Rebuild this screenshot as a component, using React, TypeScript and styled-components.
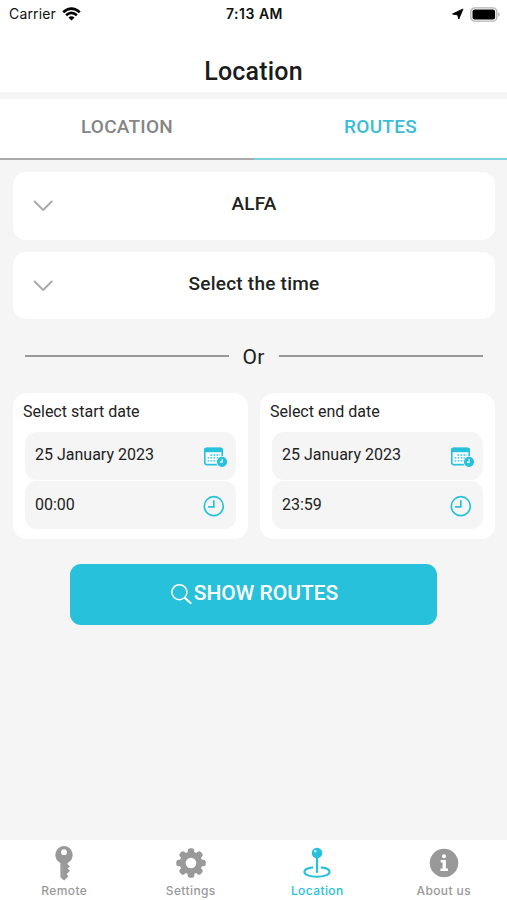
import React from "react";
import styled, { createGlobalStyle } from "styled-components";

const CYAN = "#27c1db";
const GREY = "#999999";

const GlobalStyle = createGlobalStyle`
  * { box-sizing: border-box; }
  body { margin: 0; background: #f5f5f5; font-family: Roboto, "Liberation Sans", sans-serif; color: #222; }
  svg { display: block; flex: none; }
`;

const Screen = styled.div`
  width: 507px;
  height: 900px;
  display: flex;
  flex-direction: column;
  overflow: hidden;
  background: #f5f5f5;
`;

const Header = styled.header`
  height: 92px;
  background: #fff;
`;

const StatusBar = styled.div`
  display: grid;
  grid-template-columns: 1fr auto 1fr;
  align-items: center;
  height: 28px;
  padding: 0 7px 0 9px;
  font: 400 14px/28px Inter, sans-serif;
  color: #111;
`;

const StatusGroup = styled.div<{ $end?: boolean }>`
  display: flex;
  align-items: center;
  gap: ${(p) => (p.$end ? 6 : 6)}px;
  justify-content: ${(p) => (p.$end ? "flex-end" : "flex-start")};
  letter-spacing: 0.15px;
`;

const Time = styled.span`
  font-weight: 600;
  letter-spacing: 0.5px;
`;

const Title = styled.h1`
  margin: 29px 0 0;
  text-align: center;
  font-size: 25px;
  line-height: 30px;
  font-weight: 500;
  letter-spacing: 0.2px;
  color: #1b1b1b;
`;

const Tabs = styled.nav`
  display: grid;
  grid-template-columns: 254px 253px;
  height: 61px;
  margin-top: 7px;
  background: #fff;
`;

const Tab = styled.div<{ $active?: boolean }>`
  padding-top: 16px;
  text-align: center;
  font-size: 19px;
  line-height: 24px;
  font-weight: 500;
  letter-spacing: 0.25px;
  color: ${(p) => (p.$active ? "#38bdd5" : "#858585")};
  border-bottom: 2px solid ${(p) => (p.$active ? "#80d2e0" : "#aaaaaa")};
`;

const Content = styled.main`
  flex: 1;
  padding: 12px 12px 0 13px;
`;

const SelectCard = styled.div`
  display: grid;
  grid-template-columns: 60px 1fr 60px;
  height: 68px;
  margin-bottom: 12px;
  border-radius: 13px;
  background: #fff;

  & + & { height: 67px; }
  svg { margin: 28px 0 0 20px; }
`;

const SelectLabel = styled.span`
  padding-top: 20px;
  text-align: center;
  font-size: 19px;
  line-height: 24px;
  font-weight: 500;
  letter-spacing: 0.23px;
`;

const Divider = styled.div`
  display: flex;
  align-items: center;
  justify-content: space-between;
  height: 24px;
  margin: 25px 12px 25px 12px;
  font-size: 21px;
  line-height: 24px;
`;

const DividerText = styled.span`
  padding: 1px 1px 0 0;
  letter-spacing: 0.2px;
`;

const Line = styled.span`
  width: 204px;
  height: 2px;
  background: #999;
`;

const DateRow = styled.div`
  display: grid;
  grid-template-columns: 1fr 1fr;
  gap: 12px;
`;

const DateCard = styled.section`
  height: 146px;
  padding: 8px 12px 0;
  border-radius: 14px;
  background: #fff;
`;

const DateLabel = styled.div`
  height: 31px;
  margin-left: -2px;
  padding-top: 1px;
  font-size: 16px;
  line-height: 20px;
`;

const Field = styled.div`
  display: flex;
  justify-content: space-between;
  height: 48px;
  margin-bottom: 1px;
  padding: 12px 8px 0 10px;
  border-radius: 12px;
  background: #f5f5f5;
  font-size: 16px;
  line-height: 20px;
`;

const FieldText = styled.span<{ $drop: number }>`
  padding-top: ${(p) => p.$drop}px;
`;

const ShowButton = styled.button`
  display: flex;
  justify-content: center;
  width: 367px;
  height: 61px;
  margin: 25px 0 0 57px;
  padding: 16px 0 0 2px;
  border: 0;
  border-radius: 11px;
  background: ${CYAN};
  color: #fff;
  font: 500 21px/26px Roboto, sans-serif;

  svg { margin: 3px 2px 0 0; }
`;

const BottomNav = styled.nav`
  display: grid;
  grid-template-columns: repeat(4, 1fr);
  height: 60px;
  padding-left: 1px;
  background: #fff;
`;

const NavItem = styled.div<{ $active?: boolean }>`
  display: flex;
  flex-direction: column;
  align-items: center;
  padding-top: 5px;
  color: ${(p) => (p.$active ? CYAN : GREY)};
  font: 500 12px/16px Inter, sans-serif;
  letter-spacing: 0.4px;

  svg { margin-bottom: 2px; }
`;

const Wifi = () => (
  <svg width="19" height="14" viewBox="0 0 19 14" fill="none" stroke="#000" strokeWidth="2.6">
    <path d="M1.2 5.2Q9.5-2 17.8 5.2M4.1 8.3Q9.5 3.5 14.9 8.3" />
    <path d="M9.5 13.5L6.4 10.5Q9.5 7.8 12.6 10.5Z" fill="#000" stroke="none" />
  </svg>
);

const Arrow = () => (
  <svg width="13" height="12" viewBox="0 0 13 12">
    <path d="M12 1L7.8 11 6.7 6.9 1.5 6Z" fill="#000" stroke="#000" strokeWidth=".9" strokeLinejoin="round" />
  </svg>
);

const Battery = () => (
  <svg width="30" height="15" viewBox="0 0 30 15">
    <rect x=".8" y=".8" width="26" height="13.4" rx="4" fill="#fff" stroke="#b2b2b2" strokeWidth="1.3" />
    <rect x="2.5" y="2.5" width="22.6" height="10" rx="2.1" fill="#000" />
    <path d="M28.3 5.1Q31 7.5 28.3 9.9Z" fill="#aaa" />
  </svg>
);

const Chevron = () => (
  <svg width="20" height="12" viewBox="0 0 20 12" fill="none" stroke="#aaa" strokeWidth="1.9" strokeLinecap="round" strokeLinejoin="round">
    <path d="M1.7 1.5L10.2 10L18.7 1.5" />
  </svg>
);

const CalendarIcon = () => (
  <svg width="25" height="24" viewBox="0 0 25 24">
    <rect x="1.8" y="4.4" width="17.4" height="16.2" rx="2" fill="#fff" stroke={CYAN} strokeWidth="1.6" />
    <path d="M1 8.3V6Q1 3.7 3.3 3.7H17.7Q20 3.7 20 6V8.3Z" fill={CYAN} />
    <path d="M7.5 11H17M4.5 13.9H17M4.5 16.8H14" stroke={CYAN} strokeWidth="1.3" strokeDasharray="1.8 1.2" />
    <circle cx="19" cy="17.8" r="5.9" fill="#f5f5f5" />
    <circle cx="19" cy="17.8" r="5.1" fill={CYAN} />
    <path d="M19.2 15V18.1H16.9" fill="none" stroke="#fff" strokeWidth="1.1" />
  </svg>
);

const ClockIcon = () => (
  <svg width="25" height="25" viewBox="0 0 25 25" fill="none" stroke={CYAN} strokeWidth="1.7">
    <circle cx="10.8" cy="13.2" r="9.5" />
    <path d="M10.8 7.2V13.8H5.1" />
  </svg>
);

const SearchIcon = () => (
  <svg width="21" height="22" viewBox="0 0 21 22" fill="none" stroke="#fff" strokeLinecap="round">
    <circle cx="8.4" cy="9.2" r="7.5" strokeWidth="1.5" />
    <path d="M14 15L19.5 20" strokeWidth="2.3" />
  </svg>
);

const KeyIcon = () => (
  <svg width="32" height="36" viewBox="0 0 32 36">
    <path
      fillRule="evenodd"
      fill={GREY}
      d="M16 1a9 9 0 0 0-3.6 17.1V32.2Q14.3 34.2 16.2 35.5L20.5 31.2 18.7 29.2 22 25.8 19.4 23.5 22 21.2 19.6 19.5V18.1A9 9 0 0 0 16 1ZM16 4.3a2.9 2.9 0 1 1 0 5.8a2.9 2.9 0 1 1 0-5.8Z"
    />
    <path d="M14.7 20V32" stroke="#b0b0b0" strokeWidth=".6" />
  </svg>
);

const GearIcon = () => (
  <svg width="32" height="36" viewBox="0 0 32 36">
    <g fill={GREY}>
      {[0, 45, 90, 135].map((angle) => (
        <rect key={angle} x="12.7" y="3.3" width="6.6" height="29.4" rx="2.5" transform={`rotate(${angle} 16 18)`} />
      ))}
      <circle cx="16" cy="18" r="11.3" />
    </g>
    <circle cx="16" cy="18" r="5.3" fill="#fff" />
  </svg>
);

const PinIcon = () => (
  <svg width="32" height="36" viewBox="0 0 32 36">
    <path d="M12.2 22.4C6 23 3.4 24.8 3.4 26.9C3.4 29.8 9 31.7 16 31.7S28.6 29.8 28.6 26.9C28.6 24.8 26 23 19.8 22.4" fill="none" stroke={CYAN} strokeWidth="2.1" />
    <path d="M16 12V27" stroke={CYAN} strokeWidth="2.2" strokeLinecap="round" />
    <circle cx="16" cy="8" r="5.3" fill={CYAN} />
    <circle cx="14.3" cy="6.2" r="1.3" fill="#c7f1f7" />
  </svg>
);

const InfoIcon = () => (
  <svg width="32" height="36" viewBox="0 0 32 36">
    <circle cx="16" cy="18" r="14.3" fill={GREY} />
    <circle cx="16" cy="11.2" r="2" fill="#fff" />
    <path d="M12.7 15H17.9V23.6H20V26.1H12.4V23.6H14.6V17.4H12.7Z" fill="#fff" />
  </svg>
);

const dates = [
  { label: "Select start date", date: "25 January 2023", time: "00:00" },
  { label: "Select end date", date: "25 January 2023", time: "23:59" },
];

export default function App() {
  return (
    <Screen>
      <GlobalStyle />
      <Header>
        <StatusBar>
          <StatusGroup>Carrier <Wifi /></StatusGroup>
          <Time>7:13 AM</Time>
          <StatusGroup $end><Arrow /><Battery /></StatusGroup>
        </StatusBar>
        <Title>Location</Title>
      </Header>
      <Tabs>
        <Tab>LOCATION</Tab>
        <Tab $active>ROUTES</Tab>
      </Tabs>
      <Content>
        <SelectCard><Chevron /><SelectLabel>ALFA</SelectLabel></SelectCard>
        <SelectCard><Chevron /><SelectLabel>Select the time</SelectLabel></SelectCard>
        <Divider><Line /><DividerText>Or</DividerText><Line /></Divider>
        <DateRow>
          {dates.map((d) => (
            <DateCard key={d.label}>
              <DateLabel>{d.label}</DateLabel>
              <Field><FieldText $drop={1}>{d.date}</FieldText><CalendarIcon /></Field>
              <Field><FieldText $drop={2}>{d.time}</FieldText><ClockIcon /></Field>
            </DateCard>
          ))}
        </DateRow>
        <ShowButton><SearchIcon />SHOW ROUTES</ShowButton>
      </Content>
      <BottomNav>
        <NavItem><KeyIcon />Remote</NavItem>
        <NavItem><GearIcon />Settings</NavItem>
        <NavItem $active><PinIcon />Location</NavItem>
        <NavItem><InfoIcon />About us</NavItem>
      </BottomNav>
    </Screen>
  );
}
